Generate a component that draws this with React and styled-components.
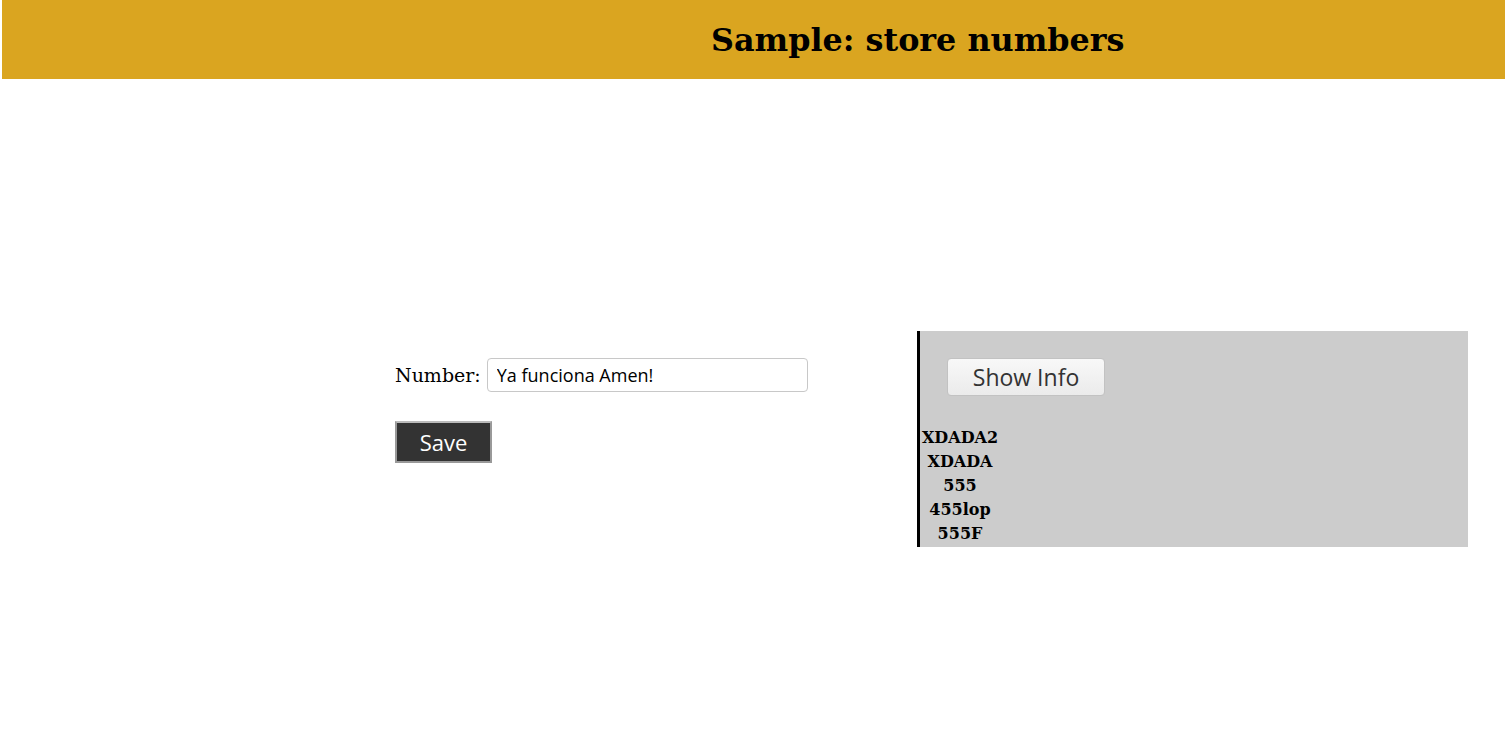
import styled, { createGlobalStyle } from "styled-components";

const GlobalStyle = createGlobalStyle`
  body {
    margin: 0;
    background: #fff;
    font-family: "DejaVu Serif", serif;
  }
`;

const Header = styled.header`
  margin-left: 2px;
  height: 79px;
  background: #daa520;
  display: flex;
  align-items: center;
  padding-left: 709px;
  h1 {
    margin: 0;
    font-size: 31.8px;
    font-weight: bold;
    color: #000;
  }
`;

const Main = styled.main`
  display: flex;
  align-items: flex-start;
  padding-top: 252px;
  padding-left: 395px;
`;

const Form = styled.form`
  width: 522px;
  padding-top: 27px;
  display: flex;
  flex-direction: column;
  align-items: flex-start;
  gap: 29px;
`;

const Field = styled.label`
  display: flex;
  align-items: center;
  gap: 6px;
  font-size: 19px;
  color: #000;
`;

const Input = styled.input`
  box-sizing: border-box;
  width: 321px;
  height: 34px;
  padding: 0 9px;
  border: 1px solid #c8c8c8;
  border-radius: 4px;
  font-family: "Open Sans", "Noto Sans", sans-serif;
  font-size: 18px;
  color: #000;
`;

const SaveButton = styled.button`
  box-sizing: border-box;
  width: 97px;
  height: 42px;
  background: #333;
  color: #fff;
  border: 2px solid #999;
  border-top-color: #bbb;
  font-family: "Open Sans", "Noto Sans", sans-serif;
  font-size: 22px;
`;

const Panel = styled.section`
  box-sizing: border-box;
  width: 551px;
  height: 216px;
  background: #ccc;
  border-left: 3px solid #000;
  display: flex;
  flex-direction: column;
  align-items: flex-start;
`;

const InfoButton = styled.button`
  box-sizing: border-box;
  margin: 27px 0 0 27px;
  width: 158px;
  height: 38px;
  background: linear-gradient(#f8f8f8, #ebebeb);
  border: 1px solid #c2c2c2;
  border-radius: 4px;
  color: #333;
  font-family: "Open Sans", "Noto Sans", sans-serif;
  font-size: 23px;
`;

const List = styled.ul`
  list-style: none;
  margin: 30px 0 0 0;
  padding: 0;
  width: 80px;
  text-align: center;
`;

const Item = styled.li`
  font-size: 16px;
  font-weight: bold;
  line-height: 24px;
  color: #000;
`;

const numbers = ["XDADA2", "XDADA", "555", "455lop", "555F"];

export default function App() {
  return (
    <>
      <GlobalStyle />
      <Header>
        <h1>Sample: store numbers</h1>
      </Header>
      <Main>
        <Form onSubmit={e => e.preventDefault()}>
          <Field>
            Number:
            <Input defaultValue="Ya funciona Amen!" />
          </Field>
          <SaveButton type="submit">Save</SaveButton>
        </Form>
        <Panel>
          <InfoButton>Show Info</InfoButton>
          <List>
            {numbers.map(n => (
              <Item key={n}>{n}</Item>
            ))}
          </List>
        </Panel>
      </Main>
    </>
  );
}
